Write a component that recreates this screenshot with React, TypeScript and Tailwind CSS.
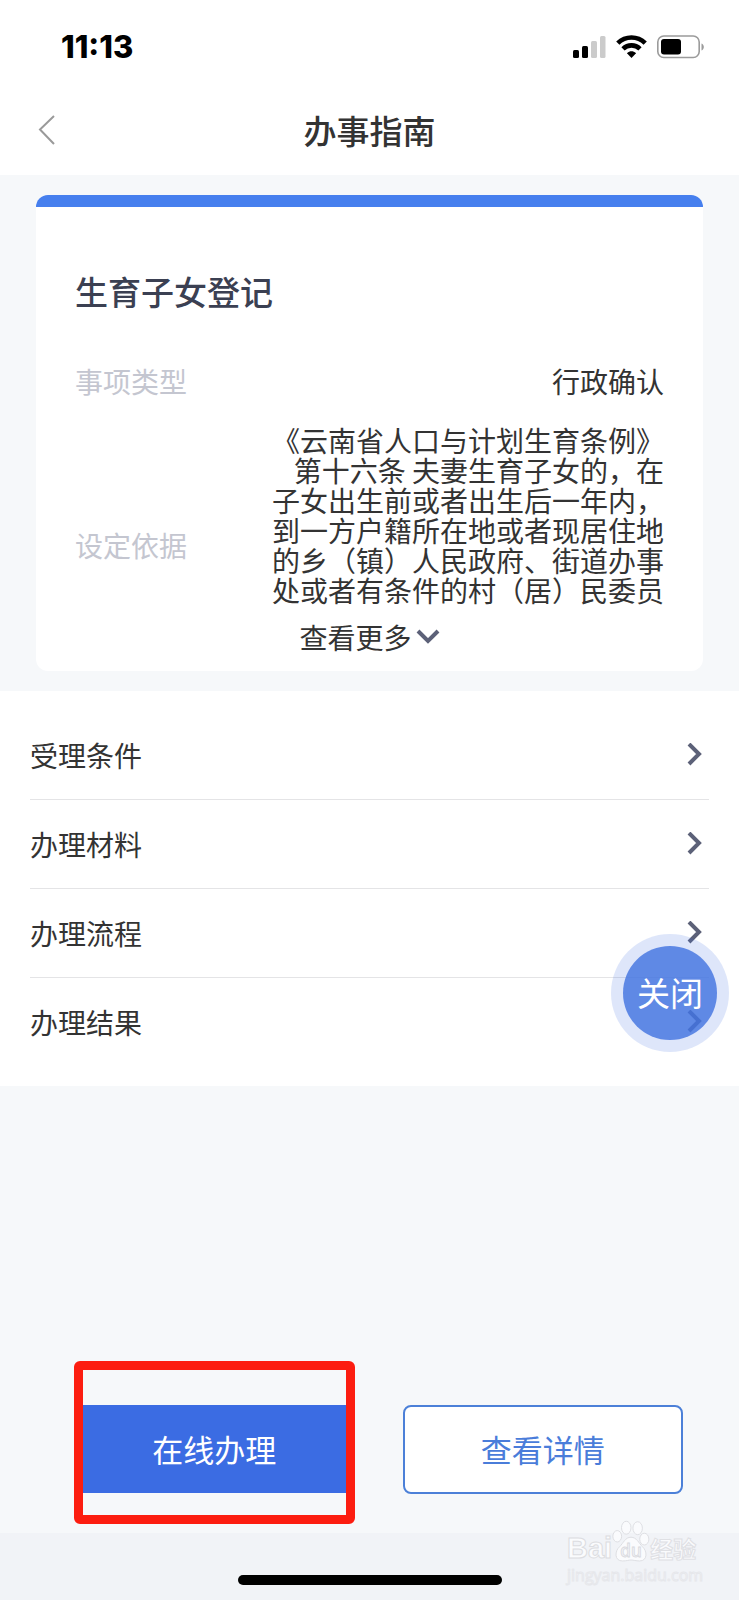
import React from "react";

const lawText = [
  "《云南省人口与计划生育条例》",
  "第十六条 夫妻生育子女的，在",
  "子女出生前或者出生后一年内，",
  "到一方户籍所在地或者现居住地",
  "的乡（镇）人民政府、街道办事",
  "处或者有条件的村（居）民委员",
].join("\n");

const sections = ["受理条件", "办理材料", "办理流程", "办理结果"];

function StatusBar() {
  return (
    <div className="flex h-[94px] items-center justify-between pr-[34px] pl-[61px]">
      <time className="font-['Inter',sans-serif] text-[31px] font-extrabold text-black">11:13</time>
      <div className="flex items-center gap-[10px]">
        <svg width="33" height="24" viewBox="0 0 33 24" aria-hidden="true">
          <rect x="0" y="15" width="6" height="8" rx="1.5" fill="#000" />
          <rect x="9" y="11" width="6" height="12" rx="1.5" fill="#000" />
          <rect x="18" y="6" width="6" height="17" rx="1.5" fill="#cbcbcb" />
          <rect x="27" y="1" width="5.5" height="22" rx="1.5" fill="#cbcbcb" />
        </svg>
        <svg width="31" height="24" viewBox="0 0 31 24" aria-hidden="true">
          <g fill="none" stroke="#000" strokeWidth="4.6">
            <path d="M1.8 8.2 C9.5 0.6 21.5 0.6 29.2 8.2" />
            <path d="M7 13.8 C11.8 9.2 19.2 9.2 24 13.8" />
          </g>
          <path d="M11.2 18 C13.6 15.6 17.4 15.6 19.8 18 V18.6 L15.5 23 L11.2 18.6 Z" fill="#000" />
        </svg>
        <svg width="48" height="24" viewBox="0 0 48 24" aria-hidden="true">
          <rect x="0.8" y="1" width="41.4" height="21.5" rx="6" fill="none" stroke="#9b9b9b" strokeWidth="1.6" />
          <rect x="4" y="4" width="20" height="15.5" rx="3" fill="#000" />
          <path d="M44.5 8.5 C47.6 9.6 47.6 14.4 44.5 15.5 Z" fill="#9b9b9b" />
        </svg>
      </div>
    </div>
  );
}

function NavBar() {
  return (
    <div className="grid h-[81px] grid-cols-[1fr_auto_1fr] items-start px-[38px]">
      <button type="button" aria-label="返回" className="w-5 pt-5">
        <svg width="18" height="32" viewBox="0 0 18 32" fill="none" stroke="#9a9a9a" strokeWidth="2">
          <path d="M16 2 L2 15.5 L16 30" />
        </svg>
      </button>
      <h1 className="pt-[14px] text-[33px] leading-[44px] font-medium text-[#333333]">办事指南</h1>
    </div>
  );
}

function GuideCard() {
  return (
    <section className="mx-9 rounded-xl border-t-12 border-[#467fee] bg-white px-[39px] pt-[62px] pb-[14px]">
      <h2 className="text-[33px] leading-[44px] font-medium text-[#3b4052]">生育子女登记</h2>
      <dl className="text-[28px] leading-[30px]">
        <div className="flex justify-between pt-[53px]">
          <dt className="text-[#c4c6d0]">事项类型</dt>
          <dd className="text-[#333333]">行政确认</dd>
        </div>
        <div className="flex items-end justify-between pt-[29px]">
          <dt className="pb-[45px] text-[#c4c6d0]">设定依据</dt>
          <dd className="text-right whitespace-pre text-[#333333]">{lawText}</dd>
        </div>
      </dl>
      <button
        type="button"
        className="mx-auto mt-3 flex h-10 items-center gap-1 text-[28px] leading-[40px] text-[#333333]"
      >
        查看更多
        <svg width="24" height="16" viewBox="0 0 24 16" fill="none" stroke="#5c6178" strokeWidth="4">
          <path d="M2 2 L12 12 L22 2" />
        </svg>
      </button>
    </section>
  );
}

function SectionList() {
  return (
    <section className="relative bg-white px-[30px] py-5">
      <ul>
        {sections.map((name) => (
          <li key={name} className="border-b border-[#e4e4e6] last:border-b-0">
            <button
              type="button"
              className="flex h-[88px] w-full items-center justify-between pr-[7px] text-left text-[28px] text-[#333333]"
            >
              {name}
              <svg width="15" height="24" viewBox="0 0 15 24" fill="none" stroke="#5c6178" strokeWidth="4">
                <path d="M2 1 L12 11 L2 21" />
              </svg>
            </button>
          </li>
        ))}
      </ul>
      <button
        type="button"
        className="absolute right-[10px] bottom-[34px] size-[118px] rounded-full bg-[#3b6de0]/17 p-3 text-[33px] text-white"
      >
        <span className="flex size-full items-center justify-center rounded-full bg-[#4374e1]/82">关闭</span>
      </button>
    </section>
  );
}

function Actions() {
  return (
    <div className="flex gap-[50px] pr-14 pb-[39px] pl-[76px]">
      <div className="relative flex-1">
        <button type="button" className="h-[88px] w-full bg-[#3b6ce3] text-[31px] text-white">
          在线办理
        </button>
        <div className="pointer-events-none absolute -inset-x-[2px] -top-11 -bottom-[30px] rounded-md border-9 border-[#fc1d10]" />
      </div>
      <button
        type="button"
        className="h-[89px] flex-1 rounded-lg border-2 border-[#4c80d8] bg-white text-[31px] text-[#4a7dda]"
      >
        查看详情
      </button>
    </div>
  );
}

function Watermark() {
  return (
    <div className="absolute right-[38px] bottom-[14px] w-[134px] text-[#fafbfd]">
      <div className="flex h-[46px] items-end">
        <span className="font-['Liberation_Sans',sans-serif] text-[29px] leading-[32px] font-bold [-webkit-text-stroke:1px_#dcdde1]">
          Bai
        </span>
        <svg width="38" height="45" viewBox="0 0 40 45" aria-hidden="true" className="shrink-0">
          <g fill="#fafbfd" stroke="#dcdde1" strokeWidth="1">
            <ellipse cx="5.5" cy="17" rx="4.6" ry="6" />
            <ellipse cx="15" cy="8" rx="5" ry="6.8" />
            <ellipse cx="27" cy="8.5" rx="5" ry="6.8" />
            <ellipse cx="34" cy="20" rx="4.8" ry="6.2" />
            <path d="M20 18 C14 18 12 24 8 28 C3 32 2 43 11 43 C16 43 17 42 20 42 C23 42 25 43 29 43 C38 43 37 32 32 28 C28 24 26 18 20 18 Z" />
          </g>
          <text
            x="20"
            y="39"
            textAnchor="middle"
            fontFamily="Open Sans, sans-serif"
            fontSize="18"
            fontWeight="600"
            fill="#f1f2f6"
            stroke="#d8d9dd"
            strokeWidth="0.8"
          >
            du
          </text>
        </svg>
        <span className="text-[23px] leading-[32px] font-bold whitespace-nowrap [-webkit-text-stroke:1px_#dfe0e4]">
          经验
        </span>
      </div>
      <div className="font-['Open_Sans',sans-serif] text-[16px] leading-[22px] [-webkit-text-stroke:1px_#e6e7eb]">
        jingyan.baidu.com
      </div>
    </div>
  );
}

export default function App() {
  return (
    <div className="relative flex min-h-screen flex-col bg-[#f6f8fa] font-['Noto_Sans_CJK_SC',sans-serif]">
      <header className="bg-white">
        <StatusBar />
        <NavBar />
      </header>
      <main className="flex flex-1 flex-col">
        <div className="py-5">
          <GuideCard />
        </div>
        <SectionList />
        <div className="mt-auto">
          <Actions />
        </div>
      </main>
      <footer className="flex h-[67px] items-end justify-center bg-[#f1f3f7] pb-[15px]">
        <div className="h-[10px] w-[264px] rounded-full bg-black" />
      </footer>
      <Watermark />
    </div>
  );
}
